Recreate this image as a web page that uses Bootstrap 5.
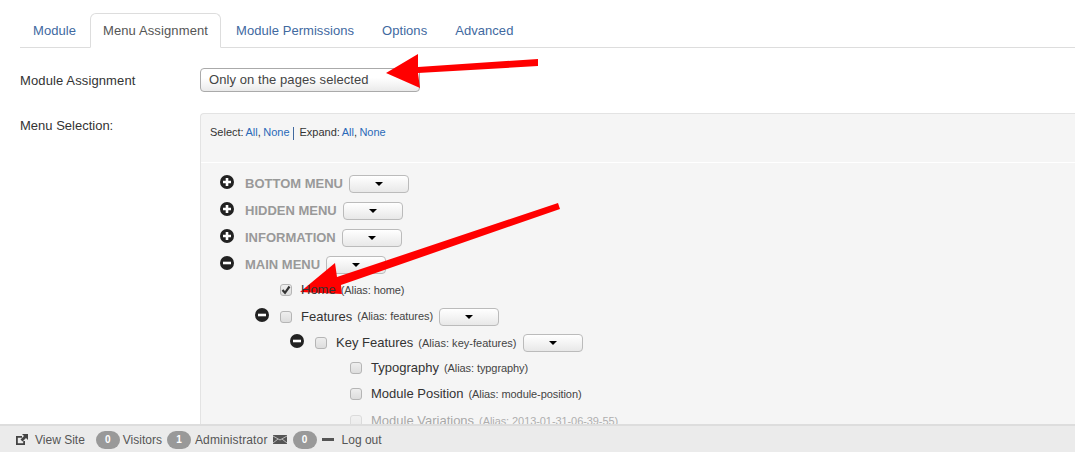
<!DOCTYPE html>
<html lang="en">
<head>
<meta charset="UTF-8">
<title>Menu Assignment</title>
<link href="https://cdn.jsdelivr.net/npm/bootstrap@5.3.2/dist/css/bootstrap.min.css" rel="stylesheet">
<style>
html, body { height: 100%; }
body {
  font-family: "Liberation Sans", Arial, sans-serif;
  font-size: 13px;
  color: #333;
  overflow: hidden;
  position: relative;
}
a { text-decoration: none; color: #2a69b8; }
.page-main { padding: 13px 0 0 20px; min-height: 0; overflow: hidden; }
.nav-tabs { border-color: #ddd; --bs-nav-tabs-border-color: #ddd; }
.nav-tabs .nav-link {
  padding: 0 12px;
  height: 35px;
  line-height: 34px;
  font-size: 13px;
  color: #41699f;
  margin-right: 2px;
  letter-spacing: .05px;
}
.nav-tabs .nav-item:first-child .nav-link { margin-right: 1px; }
.nav-tabs .nav-link.active { color: #555; border-color: #ddd #ddd #fff; letter-spacing: .12px; }
.field-row { display: flex; }
.field-label { width: 180px; flex: none; }
.assign-row { margin-top: 20px; line-height: 16px; align-items: center; }
.assign-row .field-label { letter-spacing: .12px; padding-top: 2px; }
.page-select {
  width: 220px;
  height: 24px;
  padding: 2px 0 0 8px;
  line-height: 17px;
  border: 1px solid #aaa;
  border-radius: 4px;
  background: linear-gradient(#fff 40%, #eaeaea);
  color: #444;
  letter-spacing: .08px;
}
.menu-row { margin-top: 21px; }
.menu-row .field-label { padding-top: 3px; }
.menu-panel {
  flex: 1;
  background: #f5f5f5;
  border: 1px solid #e3e3e3;
  border-right: 0;
  border-radius: 4px 0 0 4px;
  padding-bottom: 30px;
}
.panel-head {
  font-size: 11px;
  word-spacing: -.6px;
  padding: 10px 9px 0;
  height: 49px;
  border-bottom: 1px solid #fff;
  line-height: 16px;
  margin-bottom: 7px;
}
.sep { display: inline-block; height: 13px; vertical-align: middle; border-left: 1px solid #41699f; margin: 0 3px 0 1px; }
.tree-row { display: flex; align-items: center; height: 26px; white-space: nowrap; }
.tree-toggle { width: 14px; height: 14px; flex: none; margin-bottom: 4px; }
.heading-row { padding-left: 19px; height: 27px; }
.heading-row .tree-toggle { margin-right: 11px; }
.heading-name { font-weight: 700; color: #999; margin-right: 6px; }
.drop-btn {
  display: inline-flex;
  align-items: center;
  justify-content: center;
  width: 60px;
  height: 18px;
  flex: none;
  border: 1px solid #bbb;
  border-radius: 4px;
  background: linear-gradient(#fff, #e8e8e8);
}
.drop-btn::after {
  content: "";
  position: relative;
  z-index: 2;
  border-top: 4px solid #000;
  border-left: 4px solid transparent;
  border-right: 4px solid transparent;
}
.tree-check {
  width: 12px;
  height: 12px;
  flex: none;
  margin-right: 9px;
  border: 1px solid #b5b5b5;
  border-radius: 3px;
  background: linear-gradient(#eee, #ddd);
  display: flex;
  align-items: center;
  justify-content: center;
}
.alias { font-size: 11px; margin-left: 5px; color: #444; letter-spacing: -.08px; }
.row-name + .alias + .drop-btn { margin-left: 6px; }
.depth-home { padding-left: 79px; margin-top: -1px; }
.depth-home .row-name, .depth-home .alias { position: relative; z-index: 2; }
.depth-one { padding-left: 54px; height: 27px; }
.depth-one .tree-toggle, .depth-two .tree-toggle { margin-right: 11px; }
.depth-two { padding-left: 89px; }
.depth-two .alias { letter-spacing: .02px; }
.depth-leaf { padding-left: 149px; }
.depth-two + .depth-leaf { margin-top: -1px; }
.row-off { opacity: .4; margin-top: 1px; }
.status-bar {
  flex: none;
  height: 28px;
  background: #ebebeb;
  border-top: 2px solid #ddd;
  display: flex;
  align-items: center;
  padding: 1px 0 0 16px;
  font-size: 12px;
  color: #555;
  white-space: nowrap;
}
.count-pill {
  display: inline-block;
  width: 24px;
  height: 18px;
  margin: 0 3px 0 11px;
  border-radius: 9px;
  background: #999;
  color: #fff;
  font-size: 10px;
  font-weight: 700;
  line-height: 18px;
  text-align: center;
}
.pill-close { margin: 0 4px 0 5px; }
.pill-mail { margin-left: 6px; }
.admin-name { letter-spacing: .15px; }
.site-icon { margin-right: 7px; }
.mail-icon { margin-left: 5px; }
.dash-icon { margin: 0 8px 0 2px; }
.arrow-layer { position: absolute; left: 0; top: 0; z-index: 1; pointer-events: none; }
</style>
</head>
<body class="d-flex flex-column">
<div class="page-main flex-grow-1">
  <ul class="nav nav-tabs">
    <li class="nav-item"><a class="nav-link" href="#">Module</a></li>
    <li class="nav-item"><a class="nav-link active" href="#">Menu Assignment</a></li>
    <li class="nav-item"><a class="nav-link" href="#">Module Permissions</a></li>
    <li class="nav-item"><a class="nav-link" href="#">Options</a></li>
    <li class="nav-item"><a class="nav-link" href="#">Advanced</a></li>
  </ul>
  <div class="field-row assign-row">
    <div class="field-label">Module Assignment</div>
    <div class="page-select">Only on the pages selected</div>
  </div>
  <div class="field-row menu-row">
    <div class="field-label">Menu Selection:</div>
    <div class="menu-panel">
      <div class="panel-head">Select: <a href="#">All</a>, <a href="#">None</a> <span class="sep"></span> Expand: <a href="#">All</a>, <a href="#">None</a></div>
      <div class="tree-row heading-row">
        <svg class="tree-toggle" viewBox="0 0 14 14"><circle cx="7" cy="7" r="7" fill="#222"/><path d="M3 7h8M7 3v8" stroke="#fff" stroke-width="2.6"/></svg>
        <span class="heading-name">BOTTOM MENU</span><span class="drop-btn"></span>
      </div>
      <div class="tree-row heading-row">
        <svg class="tree-toggle" viewBox="0 0 14 14"><circle cx="7" cy="7" r="7" fill="#222"/><path d="M3 7h8M7 3v8" stroke="#fff" stroke-width="2.6"/></svg>
        <span class="heading-name">HIDDEN MENU</span><span class="drop-btn"></span>
      </div>
      <div class="tree-row heading-row">
        <svg class="tree-toggle" viewBox="0 0 14 14"><circle cx="7" cy="7" r="7" fill="#222"/><path d="M3 7h8M7 3v8" stroke="#fff" stroke-width="2.6"/></svg>
        <span class="heading-name">INFORMATION</span><span class="drop-btn"></span>
      </div>
      <div class="tree-row heading-row">
        <svg class="tree-toggle" viewBox="0 0 14 14"><circle cx="7" cy="7" r="7" fill="#222"/><path d="M3 7h8" stroke="#fff" stroke-width="2.6"/></svg>
        <span class="heading-name">MAIN MENU</span><span class="drop-btn"></span>
      </div>
      <div class="tree-row depth-home">
        <span class="tree-check"><svg width="10" height="10" viewBox="0 0 10 10"><path d="M1.5 5l2.5 2.8 4.5-6.3" fill="none" stroke="#333" stroke-width="2.2"/></svg></span>
        <span class="row-name">Home</span><span class="alias">(Alias: home)</span>
      </div>
      <div class="tree-row depth-one">
        <svg class="tree-toggle" viewBox="0 0 14 14"><circle cx="7" cy="7" r="7" fill="#222"/><path d="M3 7h8" stroke="#fff" stroke-width="2.6"/></svg>
        <span class="tree-check"></span>
        <span class="row-name">Features</span><span class="alias">(Alias: features)</span><span class="drop-btn"></span>
      </div>
      <div class="tree-row depth-two">
        <svg class="tree-toggle" viewBox="0 0 14 14"><circle cx="7" cy="7" r="7" fill="#222"/><path d="M3 7h8" stroke="#fff" stroke-width="2.6"/></svg>
        <span class="tree-check"></span>
        <span class="row-name">Key Features</span><span class="alias">(Alias: key-features)</span><span class="drop-btn"></span>
      </div>
      <div class="tree-row depth-leaf">
        <span class="tree-check"></span>
        <span class="row-name">Typography</span><span class="alias">(Alias: typgraphy)</span>
      </div>
      <div class="tree-row depth-leaf">
        <span class="tree-check"></span>
        <span class="row-name">Module Position</span><span class="alias">(Alias: module-position)</span>
      </div>
      <div class="tree-row depth-leaf row-off">
        <span class="tree-check"></span>
        <span class="row-name">Module Variations</span><span class="alias">(Alias: 2013-01-31-06-39-55)</span>
      </div>
    </div>
  </div>
</div>
<div class="status-bar">
  <svg width="12" height="11" viewBox="0 0 12 11" class="site-icon"><path d="M0 2h6v1.8H1.8v5.4h5.4V7H9v4H0z" fill="#444"/><path d="M6 0h6v6L10 4 6.5 7.5 4.5 5.5 8 2z" fill="#444"/></svg>
  <span>View Site</span>
  <span class="count-pill">0</span><span>Visitors</span>
  <span class="count-pill pill-close">1</span><span class="admin-name">Administrator</span>
  <svg width="14" height="9" viewBox="0 0 14 9" class="mail-icon"><rect width="14" height="9" fill="#555"/><path d="M0 1l7 4 7-4M0 8l5-4M14 8l-5-4" fill="none" stroke="#bbb"/></svg>
  <span class="count-pill pill-mail">0</span>
  <svg width="12" height="3" viewBox="0 0 12 3" class="dash-icon"><rect width="12" height="3" fill="#555"/></svg>
  <span>Log out</span>
</div>
<svg class="arrow-layer" width="1075" height="452" viewBox="0 0 1075 452">
  <path d="M538 59L418 67 418 54 386 73 420 88 418 73 538 66z" fill="#f00"/>
  <path d="M558 203L337 277 335 263 300 292 342 294 341 285 560 209z" fill="#f00"/>
</svg>
</body>
</html>
